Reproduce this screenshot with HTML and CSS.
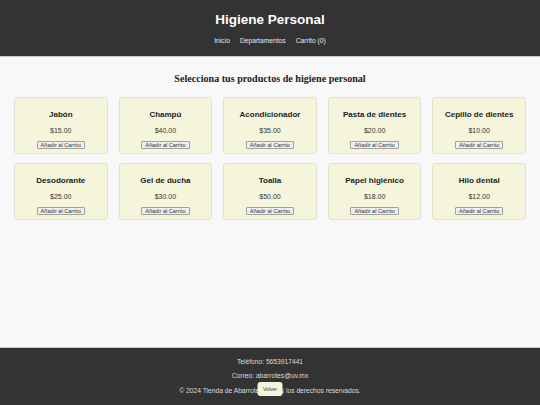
FILE: index.html
```html
<!DOCTYPE html>
<html lang="es">
<head>
    <meta charset="UTF-8">
    <title>Higiene Personal - Tienda de Abarrotes</title>
    <link rel="stylesheet" href="styles.css">
</head>
<body>

<header>
    <h1>Higiene Personal</h1>
    <nav>
        <ul>
            <li><a href="index.html">Inicio</a></li>
            <li><a href="departamentos.html">Departamentos</a></li>
            <li><a href="carrito.html" id="cart-link">Carrito (0)</a></li>
        </ul>
    </nav>
</header>

<main>
    <h2>Selecciona tus productos de higiene personal</h2>
    <div class="product-grid">
        <div class="product">
            <h3>Jabón</h3>
            <p>$15.00</p>
            <button>Añadir al Carrito</button>
        </div>
        <div class="product">
            <h3>Champú</h3>
            <p>$40.00</p>
            <button>Añadir al Carrito</button>
        </div>
        <div class="product">
            <h3>Acondicionador</h3>
            <p>$35.00</p>
            <button>Añadir al Carrito</button>
        </div>
        <div class="product">
            <h3>Pasta de dientes</h3>
            <p>$20.00</p>
            <button>Añadir al Carrito</button>
        </div>
        <div class="product">
            <h3>Cepillo de dientes</h3>
            <p>$10.00</p>
            <button>Añadir al Carrito</button>
        </div>
        <div class="product">
            <h3>Desodorante</h3>
            <p>$25.00</p>
            <button>Añadir al Carrito</button>
        </div>
        <div class="product">
            <h3>Gel de ducha</h3>
            <p>$30.00</p>
            <button>Añadir al Carrito</button>
        </div>
        <div class="product">
            <h3>Toalla</h3>
            <p>$50.00</p>
            <button>Añadir al Carrito</button>
        </div>
        <div class="product">
            <h3>Papel higiénico</h3>
            <p>$18.00</p>
            <button>Añadir al Carrito</button>
        </div>
        <div class="product">
            <h3>Hilo dental</h3>
            <p>$12.00</p>
            <button>Añadir al Carrito</button>
        </div>
    </div>
</main>

<footer>
    <p>Teléfono: 5653917441</p>
    <p>Correo: abarrotes@uv.mx</p>
    <p>&copy; 2024 Tienda de Abarrotes. Todos los derechos reservados.</p>
</footer>

<button class="back-btn">Volver</button>

</body>
</html>
```

FILE: styles.css
```css
html, body {
    height: 100%;
}
body {
    font-family: "Liberation Sans", Arial, sans-serif;
    margin: 0;
    padding: 0;
    background: #f8f8f8;
    color: #222;
    display: flex;
    flex-direction: column;
}
header {
    background: #333;
    color: white;
    text-align: center;
    padding: 12px 0 10px;
    border-bottom: 1px solid #c8c8c8;
}
header h1 {
    margin: 0 0 8px;
    font-size: 13.5px;
    line-height: 16px;
}
nav ul {
    list-style: none;
    display: flex;
    justify-content: center;
    gap: 10px;
    margin: 0;
    padding: 0;
    font-size: 6.7px;
    line-height: 10px;
}
nav a {
    color: #e8e8e8;
    text-decoration: none;
}
main {
    flex: 1;
    padding: 0 14px;
}
main h2 {
    font-family: "Liberation Serif", "Times New Roman", serif;
    font-size: 10.1px;
    line-height: 12px;
    text-align: center;
    margin: 16px 0 12px;
}
.product-grid {
    display: grid;
    grid-template-columns: repeat(5, 1fr);
    column-gap: 11px;
    row-gap: 9px;
}
.product {
    background: #f5f5dc;
    border: 1px solid #e2e2d2;
    border-radius: 3px;
    text-align: center;
    padding: 10px 4px 4px;
    height: 57px;
    box-sizing: border-box;
}
.product h3 {
    font-size: 8px;
    line-height: 10px;
    margin: 2px 0 6px;
}
.product p {
    font-size: 7px;
    line-height: 10px;
    margin: 0 0 5px;
    color: #333;
}
.product button {
    display: flex;
    align-items: center;
    margin: 0 auto;
    font-family: "Liberation Sans", Arial, sans-serif;
    font-size: 5.6px;
    line-height: 5px;
    padding: 0 3px;
    background: #efefef;
    border: 1px solid #a0a0a0;
    border-radius: 1px;
    color: #333;
    height: 8px;
}
footer {
    background: #333;
    color: #ddd;
    text-align: center;
    border-top: 1px solid #c8c8c8;
    padding: 7px 0 7px;
    font-size: 6.7px;
    line-height: 14.5px;
}
footer p {
    margin: 0;
}
.back-btn {
    position: fixed;
    left: 50%;
    bottom: 9px;
    transform: translateX(-50%);
    width: 25px;
    height: 14px;
    padding: 0;
    font-family: "Liberation Sans", Arial, sans-serif;
    font-size: 5px;
    background: #f5f5dc;
    color: #333;
    border: none;
    border-radius: 3px;
    cursor: pointer;
}
```
